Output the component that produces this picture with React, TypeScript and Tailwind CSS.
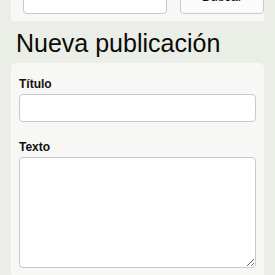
export default function App() {
  return (
    <div
      className="min-h-[275px] bg-[#ebeee7] overflow-hidden"
      style={{ fontFamily: '"Liberation Sans", Arial, Helvetica, sans-serif' }}
    >
      <div className="mx-[11px] -mt-[20px] bg-[#f7f7f5] pt-[6px] pb-[7px] pl-[12px] flex items-end gap-[13px]">
        <input
          type="text"
          className="w-[144px] h-[28px] bg-white border border-[#c9c9c9] rounded-[4px]"
        />
        <button className="w-[84px] h-[28px] bg-[#fbfbfb] border border-[#c9c9c9] rounded-[4px] text-[13px] text-[#111] leading-[16px] pb-[8px] flex items-end justify-center">
          Buscar
        </button>
      </div>
      <h1 className="ml-[16px] mt-[7px] text-[25px] leading-[30px] text-[#0a0a0a] font-normal">
        Nueva publicación
      </h1>
      <div className="mx-[11px] mt-[5px] bg-[#f7f7f5] rounded-[5px] px-[8px] pt-[14px] pb-[10px] flex flex-col">
        <label className="text-[12px] leading-[15px] font-bold text-[#111]">Título</label>
        <input
          type="text"
          className="mt-[2px] w-full h-[28px] bg-white border border-[#c9c9c9] rounded-[4px]"
        />
        <label className="mt-[18px] text-[12px] leading-[15px] font-bold text-[#111]">Texto</label>
        <textarea className="mt-[2px] w-full h-[111px] bg-white border border-[#c9c9c9] rounded-[4px] resize-y" />
      </div>
    </div>
  );
}
